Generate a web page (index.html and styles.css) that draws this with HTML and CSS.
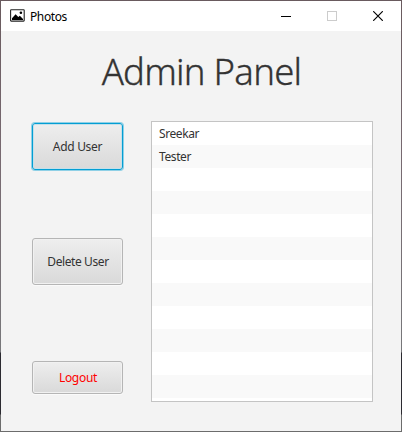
FILE: index.html
```html
<!DOCTYPE html>
<html lang="en">
<head>
<meta charset="utf-8">
<title>Photos</title>
<link rel="stylesheet" href="styles.css">
</head>
<body>
<div class="window">
  <div class="client">
    <header class="titlebar">
      <svg class="app-icon" width="15" height="13" viewBox="0 0 15 13">
        <rect x="0.6" y="0.7" width="13.6" height="11.4" rx="0.6" fill="#fff" stroke="#222" stroke-width="1.1"/>
        <path d="M2 11V9.2L5.6 5.2L8.3 8L9.8 6.8L13 10V11Z" fill="#000"/>
        <circle cx="10.9" cy="3.7" r="1.3" fill="#000"/>
      </svg>
      <span class="app-name">Photos</span>
      <div class="controls">
        <svg width="10" height="10" viewBox="0 0 10 10"><path d="M0 5.5H10" stroke="#000"/></svg>
        <svg width="10" height="10" viewBox="0 0 10 10"><rect x="0.5" y="0.5" width="9" height="9" fill="none" stroke="#ccc"/></svg>
        <svg width="10" height="10" viewBox="0 0 10 10"><path d="M0.2 0.2L9.8 9.8M9.8 0.2L0.2 9.8" stroke="#000" stroke-width="1.15"/></svg>
      </div>
    </header>
    <h1 class="heading">Admin Panel</h1>
    <main class="content">
      <div class="actions">
        <button class="button focused">Add User</button>
        <button class="button delete">Delete User</button>
        <button class="button logout">Logout</button>
      </div>
      <ul class="users">
        <li>Sreekar</li>
        <li>Tester</li>
      </ul>
    </main>
  </div>
</div>
</body>
</html>
```
FILE: styles.css
```css
* { box-sizing: border-box; }
body { margin: 0; font-family: "Noto Sans", "Open Sans", sans-serif; font-size: 12px; color: #333; }
.window {
  width: 402px;
  height: 432px;
  padding: 1px;
  background: linear-gradient(#695a5e 0, #776970 150px, #77777a 352px, #2b2a30 353px, #2b2a30 414px, #6c6c6c 415px);
}
.client { height: 430px; background: #f3f3f3; }
.titlebar { display: flex; align-items: center; height: 30px; padding: 0 18px 0 9px; background: #fff; color: #000; }
.app-icon { margin-top: -1px; }
.app-name { margin-left: 5px; font-size: 12px; letter-spacing: -0.4px; }
.controls { display: flex; gap: 36px; margin-left: auto; margin-top: -1px; }
.controls svg { display: block; }
.heading {
  margin: 0;
  height: 90px;
  padding-left: 1px;
  line-height: 81px;
  font-size: 36.5px;
  font-weight: 300;
  text-align: center;
  letter-spacing: -0.75px;
  -webkit-text-stroke: 0.35px #333;
}
.content { display: flex; align-items: flex-start; padding-left: 31px; }
.actions { display: flex; flex-direction: column; width: 91px; padding-top: 2px; }
.button {
  height: 47px;
  padding: 0 0 1px;
  border: 1px solid #b5b5b5;
  border-radius: 3px;
  background: linear-gradient(#eee, #d9d9d9);
  box-shadow: inset 0 0 0 1px #f1f1f1, 0 1px 0 #fafafa;
  font: inherit;
  color: #333;
  letter-spacing: -0.3px;
}
.focused { border-color: #039ed3; box-shadow: inset 0 0 0 1px #c4e0ea, 0 0 0 1px #8fd0e6; }
.delete { margin-top: 68px; padding-left: 1px; letter-spacing: -0.4px; }
.logout { height: 33px; margin-top: 76px; padding-left: 1px; color: #f00; }
.users {
  width: 222px;
  height: 281px;
  margin: 0 0 0 28px;
  padding: 0;
  border: 1px solid #c4c4c4;
  list-style: none;
  background: repeating-linear-gradient(#fff 0 23px, #f9f9f9 23px 46px);
}
.users li { height: 23px; padding-left: 7px; line-height: 23px; letter-spacing: -0.4px; }
```
